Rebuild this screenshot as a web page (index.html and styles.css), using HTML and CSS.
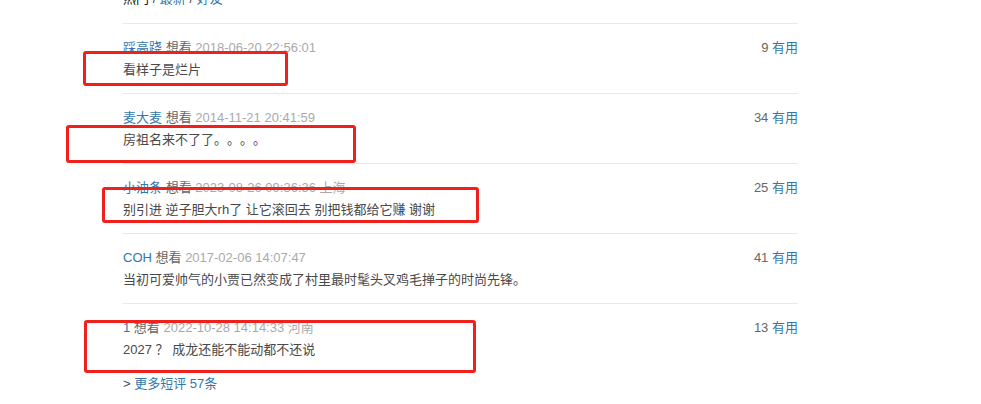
FILE: index.html
```html
<!DOCTYPE html>
<html lang="zh-CN">
<head>
    <meta charset="UTF-8">
    <meta name="viewport" content="width=device-width, initial-scale=1.0">
    <link rel="stylesheet" href="styles.css">
    <title>短评</title>
</head>
<body>
    <div class="comments">
        <div class="nav"><span class="cur">热门</span> / <a href="#">最新</a> / <a href="#">好友</a></div>

        <div class="item">
            <div class="info">
                <span><a href="#">踩高跷</a> 想看 <span class="time">2018-06-20 22:56:01</span></span>
                <span class="vote"><span class="num">9</span> <a href="#">有用</a></span>
            </div>
            <p class="short">看样子是烂片</p>
        </div>

        <div class="item">
            <div class="info">
                <span><a href="#">麦大麦</a> 想看 <span class="time">2014-11-21 20:41:59</span></span>
                <span class="vote"><span class="num">34</span> <a href="#">有用</a></span>
            </div>
            <p class="short">房祖名来不了了。。。。</p>
        </div>

        <div class="item">
            <div class="info">
                <span><a href="#">小油条</a> 想看 <span class="time">2023-08-26 09:36:36 上海</span></span>
                <span class="vote"><span class="num">25</span> <a href="#">有用</a></span>
            </div>
            <p class="short">别引进 逆子胆大rh了 让它滚回去 别把钱都给它赚 谢谢</p>
        </div>

        <div class="item">
            <div class="info">
                <span><a href="#">COH</a> 想看 <span class="time">2017-02-06 14:07:47</span></span>
                <span class="vote"><span class="num">41</span> <a href="#">有用</a></span>
            </div>
            <p class="short">当初可爱帅气的小贾已然变成了村里最时髦头叉鸡毛掸子的时尚先锋。</p>
        </div>

        <div class="item">
            <div class="info">
                <span><a href="#">1</a> 想看 <span class="time">2022-10-28 14:14:33 河南</span></span>
                <span class="vote"><span class="num">13</span> <a href="#">有用</a></span>
            </div>
            <p class="short">2027 ？ 成龙还能不能动都不还说</p>
        </div>

        <div class="more">&gt; <a href="#">更多短评 57条</a></div>
    </div>

    <!-- 标注框 -->
    <div class="mark m1"></div>
    <div class="mark m2"></div>
    <div class="mark m3"></div>
    <div class="mark m4"></div>
</body>
</html>
```

FILE: styles.css
```css
body{margin: 0;background: #fff;font-family: "Liberation Sans", "Noto Sans CJK SC", sans-serif;font-size: 13px;color: #494949;text-spacing-trim: space-all;}
a{color: #37a;text-decoration: none;}
.comments{width: 675px;margin-left: 123px;margin-top: -12px;}
.nav{line-height: 22px;height: 22px;padding-bottom: 13px;color: #494949;}
.nav .cur{color: #111;}
.item{border-top: 1px solid #e8e8e8;padding: 13px 0 12px;}
.info{display: flex;justify-content: space-between;line-height: 22px;color: #666;}
.time{color: #aaa;}
.vote .num{color: #666;}
.short{margin: 0;line-height: 22px;color: #494949;}
.more{line-height: 22px;margin-top: 0;}
.mark{position: absolute;border: 3px solid #f0201c;border-radius: 3px;box-sizing: border-box;}
.m1{left: 83px;top: 51px;width: 205px;height: 35px;}
.m2{left: 66px;top: 125px;width: 290px;height: 38px;}
.m3{left: 102px;top: 187px;width: 377px;height: 36px;}
.m4{left: 84px;top: 320px;width: 392px;height: 53px;}
```
